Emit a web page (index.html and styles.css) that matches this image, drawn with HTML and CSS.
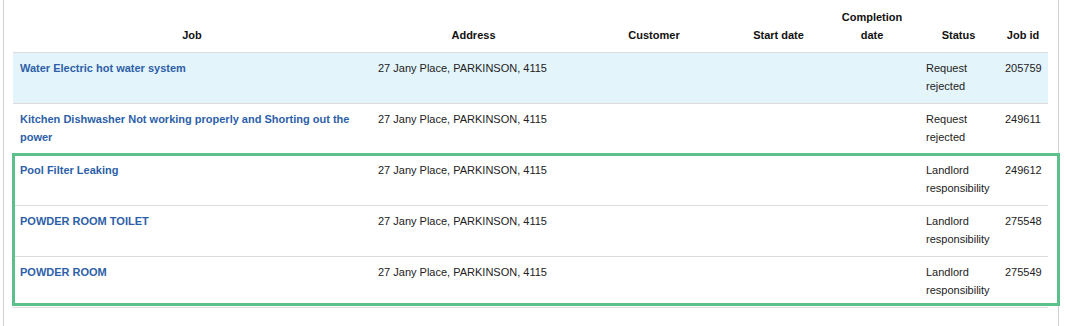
FILE: index.html
```
<!DOCTYPE html>
<html lang="en">
<head>
    <meta charset="UTF-8">
    <title>Jobs</title>
    <link rel="stylesheet" href="styles.css">
</head>
<body>

<div class="panel">
    <table class="jobs">
        <colgroup>
            <col class="col-job">
            <col class="col-address">
            <col class="col-customer">
            <col class="col-start">
            <col class="col-completion">
            <col class="col-status">
            <col class="col-id">
        </colgroup>
        <thead>
        <tr>
            <th>Job</th>
            <th>Address</th>
            <th>Customer</th>
            <th>Start date</th>
            <th>Completion date</th>
            <th>Status</th>
            <th>Job id</th>
        </tr>
        </thead>
        <tbody>
        <tr class="selected">
            <td><a href="#">Water Electric hot water system</a></td>
            <td>27 Jany Place, PARKINSON, 4115</td>
            <td></td>
            <td></td>
            <td></td>
            <td>Request rejected</td>
            <td>205759</td>
        </tr>
        <tr>
            <td><a href="#">Kitchen Dishwasher Not working properly and Shorting out the power</a></td>
            <td>27 Jany Place, PARKINSON, 4115</td>
            <td></td>
            <td></td>
            <td></td>
            <td>Request rejected</td>
            <td>249611</td>
        </tr>
        <tr>
            <td><a href="#">Pool Filter Leaking</a></td>
            <td>27 Jany Place, PARKINSON, 4115</td>
            <td></td>
            <td></td>
            <td></td>
            <td>Landlord responsibility</td>
            <td>249612</td>
        </tr>
        <tr>
            <td><a href="#">POWDER ROOM TOILET</a></td>
            <td>27 Jany Place, PARKINSON, 4115</td>
            <td></td>
            <td></td>
            <td></td>
            <td>Landlord responsibility</td>
            <td>275548</td>
        </tr>
        <tr>
            <td><a href="#">POWDER ROOM</a></td>
            <td>27 Jany Place, PARKINSON, 4115</td>
            <td></td>
            <td></td>
            <td></td>
            <td>Landlord responsibility</td>
            <td>275549</td>
        </tr>
        </tbody>
    </table>

    <div class="highlight"></div>
</div>

</body>
</html>
```

FILE: styles.css
```
html
{
    font-family: "Liberation Sans", Arial, sans-serif;
    font-size: 11px;
    color: #222;
}

body
{
    margin: 0;
}

.panel
{
    position: relative;
    width: 1035px;
    min-height: 326px;
    margin-left: 3px;
    padding: 0 10px 0 9px;
    border-left: 1px solid #d0d0d0;
    border-right: 1px solid #d0d0d0;
}

.jobs
{
    width: 1035px;
    border-collapse: collapse;
    table-layout: fixed;
}

.col-job { width: 358px; }
.col-address { width: 205px; }
.col-customer { width: 156px; }
.col-start { width: 93px; }
.col-completion { width: 94px; }
.col-status { width: 79px; }
.col-id { width: 50px; }

th, td
{
    padding: 6px 7px 8px;
    line-height: 18px;
    height: 36px;
    text-align: left;
    vertical-align: top;
    border-bottom: 1px solid #dcdcdc;
}

th
{
    padding: 8px 7px 8px;
    text-align: center;
    vertical-align: bottom;
    font-weight: bold;
    color: #111;
}

.selected td
{
    background: #e4f4fb;
}

.jobs a
{
    color: #2d5fa8;
    font-weight: bold;
    text-decoration: none;
}

/* marker drawn round the landlord jobs */
.highlight
{
    position: absolute;
    left: 8px;
    top: 153px;
    width: 1042px;
    height: 147px;
    border: 3px solid #5cc08a;
    pointer-events: none;
}
```
